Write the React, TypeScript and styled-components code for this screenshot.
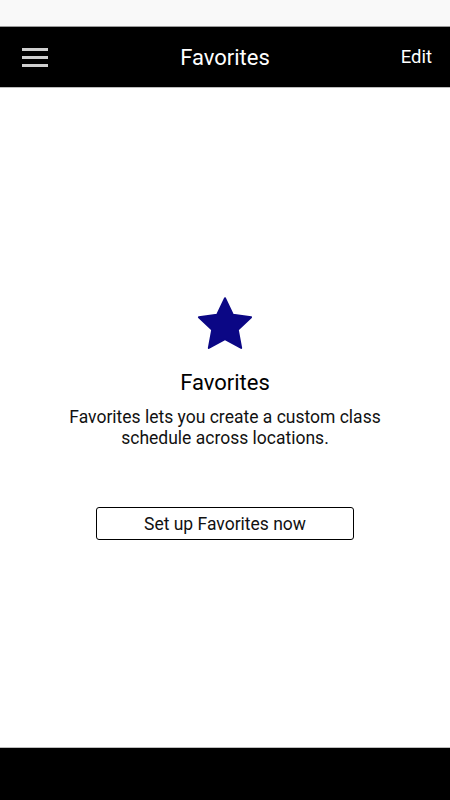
import React from 'react';
import styled, { createGlobalStyle } from 'styled-components';

const GlobalStyle = createGlobalStyle`
    html, body {
        margin: 0;
        padding: 0;
        background: #ffffff;
        font-family: Roboto, "Liberation Sans", sans-serif;
    }
`;

const Screen = styled.div`
    display: flex;
    flex-direction: column;
    width: 450px;
    height: 800px;
    overflow: hidden;
`;

const StatusBar = styled.div`
    height: 26px;
    background: #f9f9f9;
    border-bottom: 1px solid #9a9a9a;
`;

const Toolbar = styled.header`
    display: flex;
    align-items: center;
    justify-content: space-between;
    height: 60px;
    padding: 0 18px 0 22px;
    background: #000;
    border-bottom: 1px solid #bdbdbd;
    position: relative;
`;

const MenuButton = styled.div`
    display: flex;
    flex-direction: column;
    gap: 5px;
    width: 26px;
`;

const MenuLine = styled.span`
    display: block;
    height: 3px;
    background: #cfcfcf;
`;

const Title = styled.h1`
    position: absolute;
    left: 0;
    right: 0;
    margin: 0;
    text-align: center;
    font-size: 22px;
    font-weight: 400;
    color: #fff;
    pointer-events: none;
`;

const EditLink = styled.span`
    font-size: 18.5px;
    color: #fff;
`;

const Content = styled.main`
    flex: 1;
    display: flex;
    flex-direction: column;
    align-items: center;
    padding-top: 208px;
`;

const EmptyTitle = styled.h2`
    margin: 18px 0 0;
    font-size: 22px;
    font-weight: 400;
    color: #000;
`;

const EmptyText = styled.p`
    margin: 12px 0 0;
    width: 340px;
    text-align: center;
    font-size: 17.5px;
    line-height: 21px;
    color: #111;
`;

const SetupButton = styled.button`
    margin-top: 58px;
    width: 258px;
    height: 33px;
    border: 1px solid #000;
    border-radius: 3px;
    background: #fff;
    font-family: Roboto, "Liberation Sans", sans-serif;
    font-size: 17.5px;
    color: #111;
`;

const NavBar = styled.footer`
    height: 52px;
    background: #000;
    border-top: 1px solid #bdbdbd;
`;

const Star = () => (
    <svg width="58" height="56" viewBox="0 0 24 23">
        <path
            d="M12 0.8l3.3 6.9 7.5 1-5.5 5.2 1.4 7.5L12 17.8l-6.7 3.6 1.4-7.5L1.2 8.7l7.5-1z"
            fill="#0b0785"
            stroke="#0b0785"
            strokeWidth="0.8"
            strokeLinejoin="round"
        />
    </svg>
);

export default function App() {
    return (
        <Screen>
            <GlobalStyle />
            <StatusBar />
            <Toolbar>
                <MenuButton>
                    <MenuLine />
                    <MenuLine />
                    <MenuLine />
                </MenuButton>
                <Title>Favorites</Title>
                <EditLink>Edit</EditLink>
            </Toolbar>
            <Content>
                <Star />
                <EmptyTitle>Favorites</EmptyTitle>
                <EmptyText>Favorites lets you create a custom class schedule across locations.</EmptyText>
                <SetupButton>Set up Favorites now</SetupButton>
            </Content>
            <NavBar />
        </Screen>
    );
}
